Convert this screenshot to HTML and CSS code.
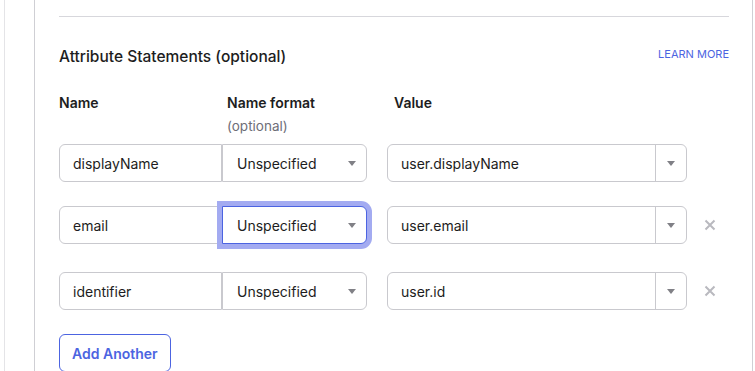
FILE: index.html
```html
<!doctype html>
<html lang="en">
  <head>
    <meta charset="UTF-8" />
    <meta name="viewport" content="width=device-width, initial-scale=1.0" />
    <title>Attribute Statements</title>
    <link rel="stylesheet" href="styles.css">
  </head>
  <body>
    <div class="shell">
      <div class="panel">
        <hr class="divider" />

        <div class="section-header">
          <h2>Attribute Statements (optional)</h2>
          <a href="#" class="learn-more">LEARN MORE</a>
        </div>

        <div class="labels">
          <div class="label label-name">Name</div>
          <div class="label label-format">
            Name format
            <span class="hint">(optional)</span>
          </div>
          <div class="label label-value">Value</div>
        </div>

        <div class="row">
          <div class="field name-field">displayName</div>
          <div class="field select-field">
            <span>Unspecified</span>
            <span class="caret"></span>
          </div>
          <div class="field value-field">
            <span class="value-text">user.displayName</span>
            <span class="value-toggle"><span class="caret"></span></span>
          </div>
        </div>

        <div class="row">
          <div class="field name-field">email</div>
          <div class="field select-field is-focused">
            <span>Unspecified</span>
            <span class="caret"></span>
          </div>
          <div class="field value-field">
            <span class="value-text">user.email</span>
            <span class="value-toggle"><span class="caret"></span></span>
          </div>
          <button class="remove" aria-label="Remove">
            <svg width="12" height="12" viewBox="0 0 12 12"><path d="M1.5 1.5l9 9M10.5 1.5l-9 9" stroke="#b9b9bf" stroke-width="2" fill="none"/></svg>
          </button>
        </div>

        <div class="row row-last">
          <div class="field name-field">identifier</div>
          <div class="field select-field">
            <span>Unspecified</span>
            <span class="caret"></span>
          </div>
          <div class="field value-field">
            <span class="value-text">user.id</span>
            <span class="value-toggle"><span class="caret"></span></span>
          </div>
          <button class="remove" aria-label="Remove">
            <svg width="12" height="12" viewBox="0 0 12 12"><path d="M1.5 1.5l9 9M10.5 1.5l-9 9" stroke="#b9b9bf" stroke-width="2" fill="none"/></svg>
          </button>
        </div>

        <button class="add-button">Add Another</button>
      </div>
    </div>
  </body>
</html>
```

FILE: styles.css
```css
body {
  font-family: Inter, "Noto Sans", sans-serif;
  color: #1d1d21;
  background-color: white;
  margin: 0;
  padding: 0;
  overflow: hidden;
}
.shell {
  margin-left: 4px;
  border-left: 1px solid #e4e4e7;
  padding-left: 29px;
}
.panel {
  width: 670px;
  border-left: 1px solid #cfcfd4;
  border-right: 1px solid #cfcfd4;
  padding: 16px 23px 40px 24px;
}
.divider {
  border: none;
  border-top: 1px solid #d7d7dc;
  margin: 0;
}
.section-header {
  display: flex;
  justify-content: space-between;
  align-items: flex-start;
  margin-top: 30px;
}
.section-header h2 {
  font-size: 15.5px;
  font-weight: 500;
  line-height: 20px;
  margin: 0;
}
.learn-more {
  font-size: 11px;
  line-height: 14px;
  color: #4c64e1;
  text-decoration: none;
}
.labels {
  display: flex;
  margin-top: 26px;
}
.label {
  font-size: 14px;
  font-weight: 600;
  line-height: 20px;
}
.label-name {
  width: 168px;
}
.label-format {
  width: 167px;
}
.hint {
  display: block;
  margin-top: 4px;
  font-size: 13.5px;
  font-weight: 400;
  line-height: 18px;
  color: #6e6e78;
}
.row {
  display: flex;
  align-items: center;
  margin-top: 9px;
}
.row + .row {
  margin-top: 24px;
}
.row + .row-last {
  margin-top: 28px;
}
.field {
  box-sizing: border-box;
  height: 38px;
  border: 1px solid #c9c9ce;
  font-size: 14px;
  display: flex;
  align-items: center;
  background-color: white;
}
.name-field {
  width: 163px;
  padding-left: 13px;
  border-radius: 6px 0 0 6px;
}
.select-field {
  width: 145px;
  padding: 0 10px 0 14px;
  justify-content: space-between;
  border-radius: 0 6px 6px 0;
}
.select-field.is-focused {
  border-color: #4c64e1;
  box-shadow: 0 0 0 5px #a3abf1;
}
.caret {
  width: 0;
  height: 0;
  border-left: 4px solid transparent;
  border-right: 4px solid transparent;
  border-top: 5px solid #808086;
}
.value-field {
  width: 300px;
  margin-left: 20px;
  border-radius: 6px;
}
.value-text {
  flex: 1;
  padding-left: 13px;
}
.value-toggle {
  width: 30px;
  height: 100%;
  border-left: 1px solid #c9c9ce;
  display: flex;
  align-items: center;
  justify-content: center;
}
.remove {
  margin-left: 17px;
  border: none;
  background: none;
  padding: 0;
  display: flex;
  cursor: pointer;
}
.add-button {
  margin-top: 24px;
  height: 38px;
  padding: 0 12px;
  border: 1px solid #4c64e1;
  border-radius: 6px;
  background-color: white;
  color: #4c64e1;
  font-family: Inter, "Noto Sans", sans-serif;
  font-size: 14px;
  font-weight: 600;
  cursor: pointer;
}
```
